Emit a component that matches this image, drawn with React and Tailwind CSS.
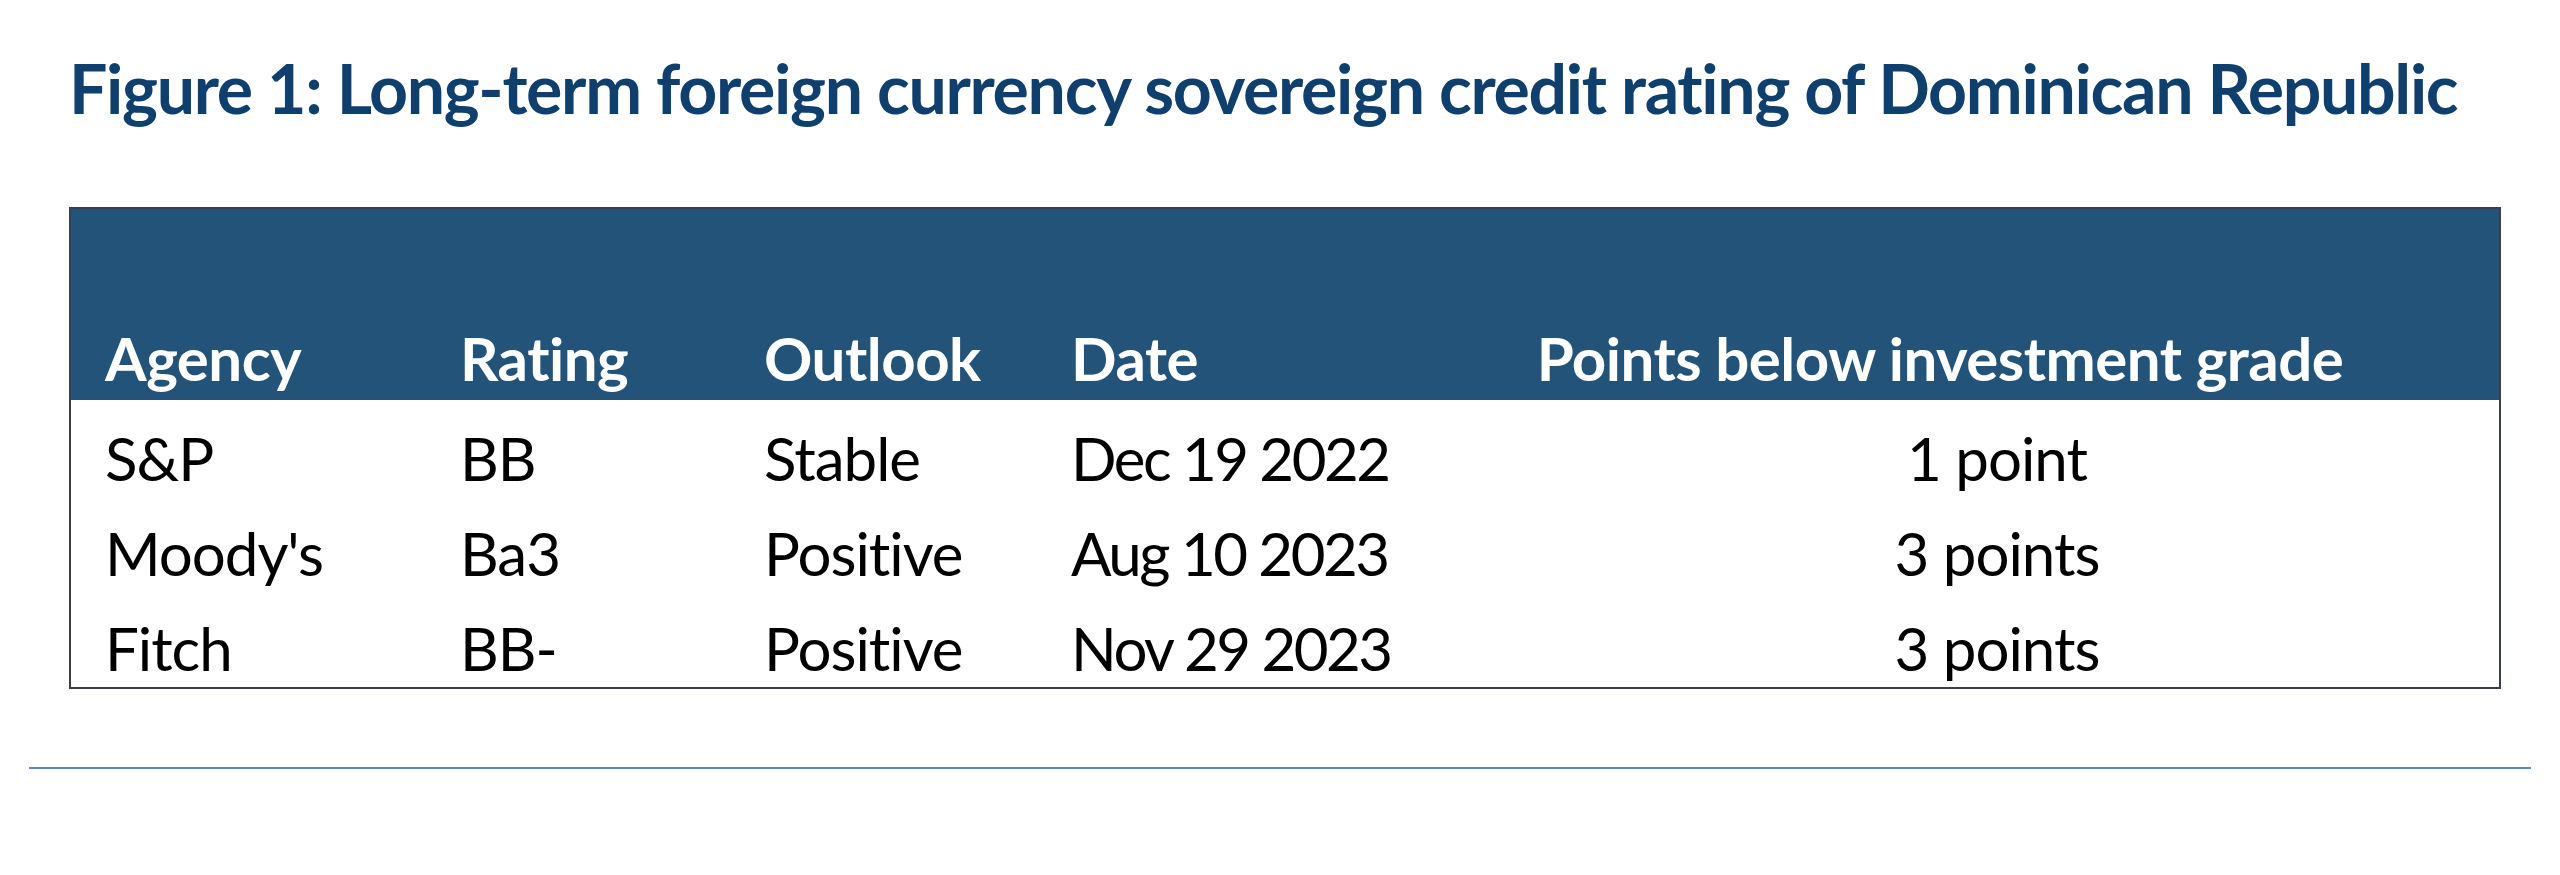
const rows = [
  { agency: "S&P", rating: "BB", outlook: "Stable", date: "Dec 19 2022", points: "1 point" },
  { agency: "Moody's", rating: "Ba3", outlook: "Positive", date: "Aug 10 2023", points: "3 points" },
  { agency: "Fitch", rating: "BB-", outlook: "Positive", date: "Nov 29 2023", points: "3 points" },
];

const cols = "grid grid-cols-[355px_304px_307px_344px_1fr] whitespace-nowrap";

export default function App() {
  return (
    <div className="min-h-[875px] w-[2560px] overflow-hidden bg-white font-['Lato',sans-serif]">
      <div className="pl-[69px] pt-[53px]">
        <h1 className="whitespace-nowrap text-[68px] font-bold leading-[70px] tracking-[-1.3px] text-[#0f3f6d]">
          Figure 1: Long-term foreign currency sovereign credit rating of Dominican Republic
        </h1>
      </div>

      <div className="ml-[69px] mt-[84px] w-[2432px] border-2 border-[#3a3f4a]">
        <div className={`${cols} h-[191px] items-end bg-[#245379] pb-[12px] text-[60px] font-bold leading-none tracking-[-0.5px] text-white`}>
          <div className="pl-[34px]">Agency</div>
          <div className="pl-[34px]">Rating</div>
          <div className="pl-[34px]">Outlook</div>
          <div className="pl-[34px]">Date</div>
          <div className="text-center">Points below investment grade</div>
        </div>
        <div className="h-[287px] overflow-hidden pt-[11px] text-[60px] leading-[95px] tracking-[-1px] text-black">
          {rows.map((r) => (
            <div key={r.agency} className={cols}>
              <div className="pl-[34px]">{r.agency}</div>
              <div className="pl-[34px]">{r.rating}</div>
              <div className="pl-[34px]">{r.outlook}</div>
              <div className="pl-[34px] tracking-[-2.5px]">{r.date}</div>
              <div className="pl-[114px] text-center">{r.points}</div>
            </div>
          ))}
        </div>
      </div>

      <div className="mx-[29px] mt-[78px] h-[2px] bg-[#5a88bd]" />
    </div>
  );
}
